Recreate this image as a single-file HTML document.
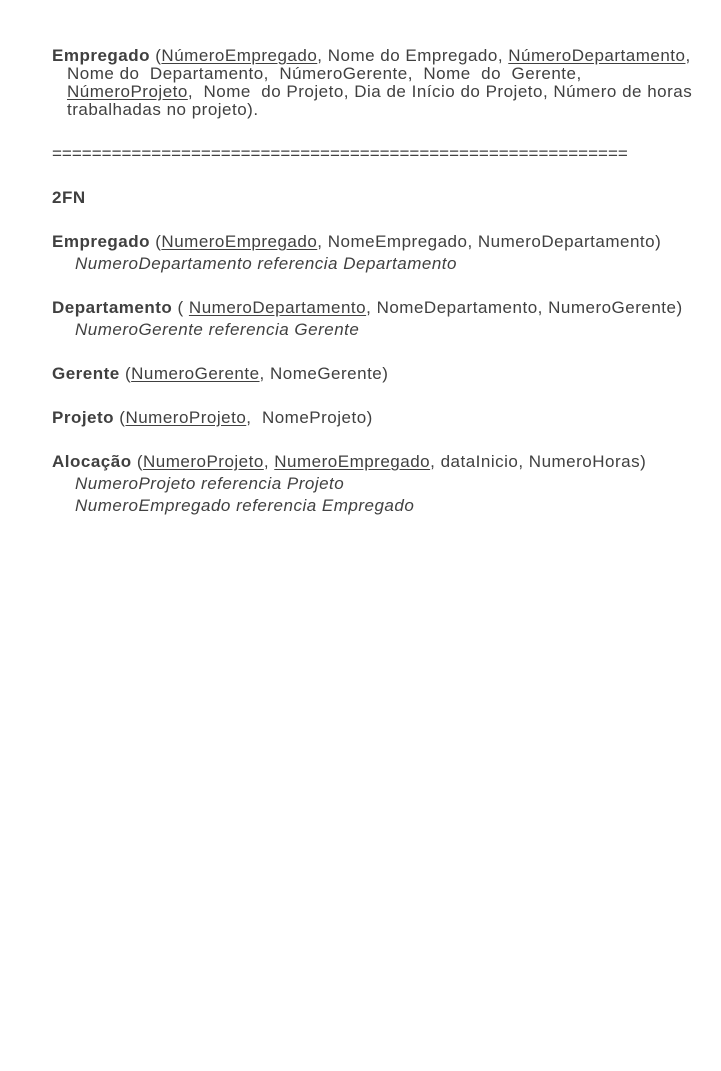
<!DOCTYPE html>
<html><head><meta charset="utf-8"><style>
body{margin:0;width:721px;height:1071px;background:#fff;position:relative;font-family:"Liberation Sans",sans-serif;color:#404040;font-size:17px;}
.l{position:absolute;white-space:nowrap;line-height:20px;letter-spacing:0.5px;}
u{text-decoration:underline;text-underline-offset:2px;}
i{font-style:italic;}
</style></head><body>
<div class="l" style="left:52px;top:46px"><b>Empregado</b> (<u>NúmeroEmpregado</u>, Nome do Empregado, <u>NúmeroDepartamento</u>,</div>
<div class="l" style="left:67px;top:64px">Nome do&nbsp; Departamento,&nbsp; NúmeroGerente,&nbsp; Nome&nbsp; do&nbsp; Gerente,</div>
<div class="l" style="left:67px;top:82px"><u>NúmeroProjeto</u>,&nbsp; Nome&nbsp; do Projeto, Dia de Início do Projeto, Número de horas</div>
<div class="l" style="left:67px;top:100px">trabalhadas no projeto).</div>
<div class="l" style="left:52px;top:144px;letter-spacing:0">==========================================================</div>
<div class="l" style="left:52px;top:188px"><b>2FN</b></div>
<div class="l" style="left:52px;top:232px"><b>Empregado</b> (<u>NumeroEmpregado</u>, NomeEmpregado, NumeroDepartamento)</div>
<div class="l" style="left:75px;top:254px"><i>NumeroDepartamento referencia Departamento</i></div>
<div class="l" style="left:52px;top:298px"><b>Departamento</b> ( <u>NumeroDepartamento</u>, NomeDepartamento, NumeroGerente)</div>
<div class="l" style="left:75px;top:320px"><i>NumeroGerente referencia Gerente</i></div>
<div class="l" style="left:52px;top:364px"><b>Gerente</b> (<u>NumeroGerente</u>, NomeGerente)</div>
<div class="l" style="left:52px;top:408px"><b>Projeto</b> (<u>NumeroProjeto</u>,&nbsp; NomeProjeto)</div>
<div class="l" style="left:52px;top:452px"><b>Alocação</b> (<u>NumeroProjeto</u>, <u>NumeroEmpregado</u>, dataInicio, NumeroHoras)</div>
<div class="l" style="left:75px;top:474px"><i>NumeroProjeto referencia Projeto</i></div>
<div class="l" style="left:75px;top:496px"><i>NumeroEmpregado referencia Empregado</i></div>
</body></html>
